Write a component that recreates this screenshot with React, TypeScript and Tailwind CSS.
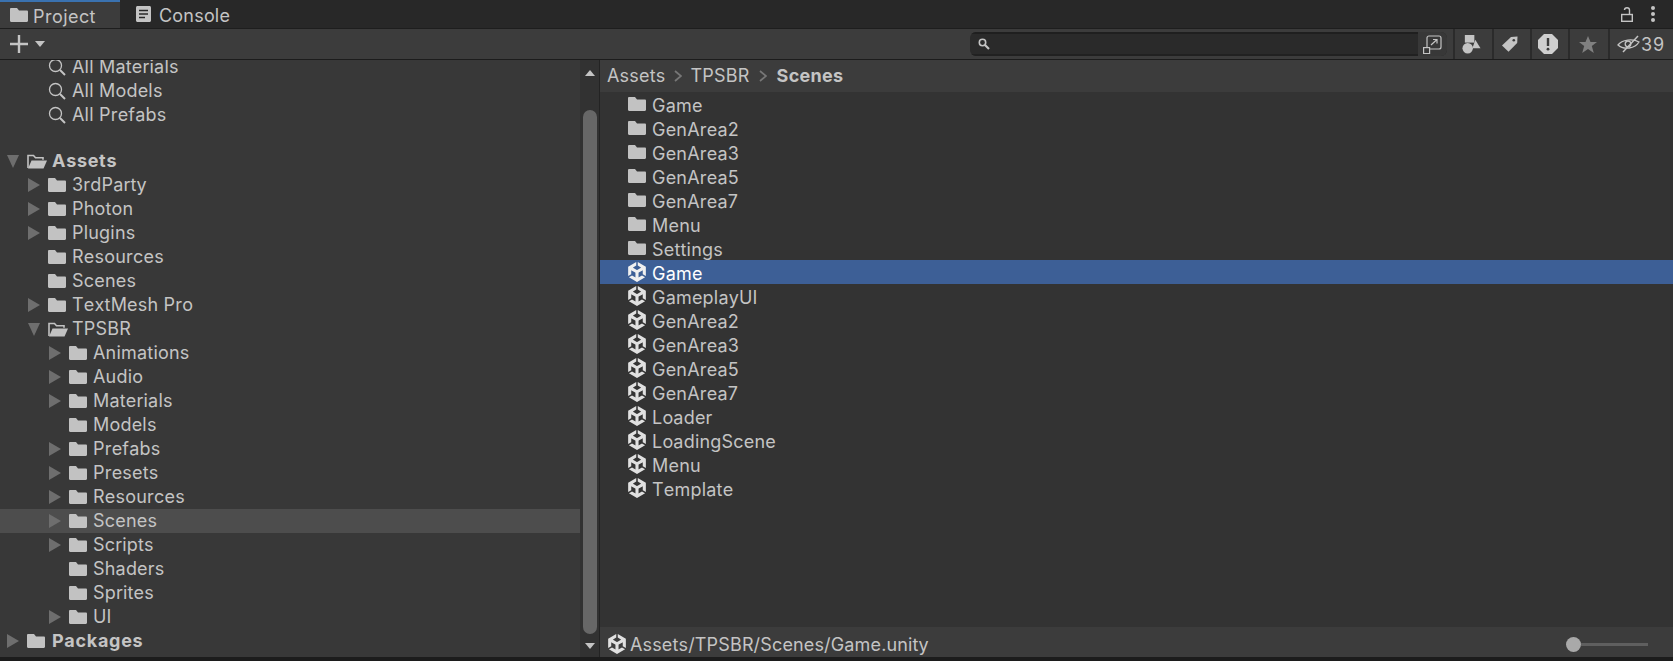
import React from "react";
import { SiUnity } from "react-icons/si";

const Folder = ({ className = "" }: { className?: string }) => (
  <svg viewBox="0 0 18 14" width="18" height="14" className={className}>
    <path d="M0 1.200C0 .5.5 0 1.200 0H7l2 2.400h7.800c.7 0 1.200.5 1.200 1.200v9.200c0 .7-.5 1.200-1.200 1.200H1.200C.5 14 0 13.500 0 12.800Z" fill="#c2c2c2" />
  </svg>
);

const OpenFolder = () => (
  <svg viewBox="0 0 20 15" width="20" height="15">
    <path d="M1 14V1.500h5.500l2 2.300h7.500v2" fill="none" stroke="#c2c2c2" strokeWidth="1.600" />
    <path d="M1 14.500 4.500 6.500H20l-3.500 8Z" fill="#c2c2c2" />
  </svg>
);

const Search = () => (
  <svg viewBox="0 0 18 18" width="18" height="18" fill="none" stroke="#c4c4c4">
    <circle cx="7.500" cy="7.500" r="6" strokeWidth="1.300" />
    <path d="M12 12 17 17" strokeWidth="2" />
  </svg>
);

const Arrow = ({ open = false }: { open?: boolean }) =>
  open ? (
    <svg viewBox="0 0 12 13" width="12" height="13"><path d="M0 0H12L6 13Z" fill="#6e6e6e" /></svg>
  ) : (
    <svg viewBox="0 0 12 14" width="12" height="14"><path d="M0 0 12 7 0 14Z" fill="#6e6e6e" /></svg>
  );

type Row = { name: string; depth: number; arrow?: boolean; open?: boolean; bold?: boolean; selected?: boolean };

const tree: Row[] = [
  { name: "Assets", depth: 0, arrow: true, open: true, bold: true },
  { name: "3rdParty", depth: 1, arrow: true },
  { name: "Photon", depth: 1, arrow: true },
  { name: "Plugins", depth: 1, arrow: true },
  { name: "Resources", depth: 1 },
  { name: "Scenes", depth: 1 },
  { name: "TextMesh Pro", depth: 1, arrow: true },
  { name: "TPSBR", depth: 1, arrow: true, open: true },
  { name: "Animations", depth: 2, arrow: true },
  { name: "Audio", depth: 2, arrow: true },
  { name: "Materials", depth: 2, arrow: true },
  { name: "Models", depth: 2 },
  { name: "Prefabs", depth: 2, arrow: true },
  { name: "Presets", depth: 2, arrow: true },
  { name: "Resources", depth: 2, arrow: true },
  { name: "Scenes", depth: 2, arrow: true, selected: true },
  { name: "Scripts", depth: 2, arrow: true },
  { name: "Shaders", depth: 2 },
  { name: "Sprites", depth: 2 },
  { name: "UI", depth: 2, arrow: true },
  { name: "Packages", depth: 0, arrow: true, bold: true },
];

const depthPad = ["pl-[7px]", "pl-[28px]", "pl-[49px]"];

function TreeRow({ r }: { r: Row }) {
  return (
    <div className={`flex h-6 items-center ${depthPad[r.depth]} ${r.selected ? "bg-[#4d4d4d]" : ""}`}>
      <div className="flex w-[20px] shrink-0 items-center">{r.arrow && <Arrow open={r.open} />}</div>
      <div className="flex w-[20px] shrink-0 items-center">{r.open ? <OpenFolder /> : <Folder />}</div>
      <span className={r.bold ? "ml-[5px] font-bold tracking-[0.7px]" : "ml-[4px]"}>{r.name}</span>
    </div>
  );
}

const folders = ["Game", "GenArea2", "GenArea3", "GenArea5", "GenArea7", "Menu", "Settings"];
const scenes = ["Game", "GameplayUI", "GenArea2", "GenArea3", "GenArea5", "GenArea7", "Loader", "LoadingScene", "Menu", "Template"];

export default function App() {
  return (
    <div className="flex h-[661px] w-[1673px] flex-col overflow-hidden bg-[#1c1c1c] font-['Inter',sans-serif] text-[18px] leading-6 tracking-[0.2px] text-[#c4c4c4] [font-kerning:none]">
      {/* Tab bar */}
      <div className="flex h-[29px] shrink-0 items-stretch border-b border-[#1e1e1e] bg-[#282828]">
        <div className="flex w-[120px] items-center gap-[5px] border-t-2 border-[#3a72b0] bg-[#3c3c3c] pl-[10px]">
          <Folder />
          <span className="pt-[3px] tracking-[0.4px]">Project</span>
        </div>
        <div className="ml-[16px] flex items-center gap-[8px]">
          <svg viewBox="0 0 15 16" width="15" height="16">
            <path d="M0 1.500C0 .7.7 0 1.500 0h12c.8 0 1.500.7 1.500 1.500v13c0 .8-.7 1.500-1.500 1.500h-12C.7 16 0 15.300 0 14.500Z" fill="#c4c4c4" />
            <path d="M3 4.500h9M3 8h9M3 11.500h6" stroke="#282828" strokeWidth="1.400" />
          </svg>
          <span className="pt-[4px]">Console</span>
        </div>
        <div className="flex-1" />
        <div className="mr-[18px] flex items-center gap-[18px]">
          <svg viewBox="0 0 12 15" width="12" height="15" fill="none" stroke="#c4c4c4" strokeWidth="1.400">
            <rect x="0.700" y="7.500" width="10.600" height="6.800" />
            <path d="M8.500 7.500V3C8.500 1.600 7.600.8 6 .8S3.500 1.600 3.500 3" />
          </svg>
          <div className="flex flex-col gap-[2px]">
            <div className="size-[4px] rounded-full bg-[#c4c4c4]" />
            <div className="size-[4px] rounded-full bg-[#c4c4c4]" />
            <div className="size-[4px] rounded-full bg-[#c4c4c4]" />
          </div>
        </div>
      </div>

      {/* Toolbar */}
      <div className="flex h-[31px] shrink-0 items-center border-b border-[#1c1c1c] bg-[#3c3c3c]">
        <svg viewBox="0 0 18 18" width="18" height="18" className="ml-[10px]">
          <path d="M9 0V18M0 9H18" stroke="#c4c4c4" strokeWidth="2.400" />
        </svg>
        <svg viewBox="0 0 10 6" width="10" height="6" className="ml-[7px]"><path d="M0 0H10L5 6Z" fill="#c4c4c4" /></svg>
        <div className="flex-1" />
        <div className="flex h-[24px] w-[477px] items-stretch overflow-hidden rounded-[6px] bg-[#2a2a2a]">
          <div className="flex flex-1 items-center border-t-2 border-b-2 border-t-[#1f1f1f] border-b-[#212121] pl-[8px]">
            <svg viewBox="0 0 12 12" width="12" height="12" fill="none" stroke="#c4c4c4">
              <circle cx="4.500" cy="4.500" r="3.200" strokeWidth="1.600" />
              <path d="M7 7 11 11" strokeWidth="2.200" />
            </svg>
          </div>
          <div className="flex w-[29px] items-center justify-center bg-[#383838]">
            <svg viewBox="0 0 19 19" width="19" height="19" fill="none" stroke="#c4c4c4" strokeWidth="1.200">
              <path d="M4 13V3C4 1.800 4.800 1 6 1H16C17.200 1 18 1.800 18 3V12C18 13.200 17.200 14 16 14H7" />
              <rect x="0.600" y="12.600" width="6" height="6" />
              <path d="M8 10 14 4.500M10 4.500H14V8.500" />
            </svg>
          </div>
        </div>
        <div className="ml-[6px] flex h-full">
          <div className="flex w-[39px] items-center border-l-2 border-[#2b2b2b] pl-[7px]">
            <svg viewBox="0 0 20 20" width="19" height="19" fill="#c4c4c4">
              <rect x="3" y="0" width="10" height="8" />
              <circle cx="6" cy="14" r="5.500" />
              <path d="M14 5 19.500 14H11Z" />
            </svg>
          </div>
          <div className="flex w-[38px] items-center border-l-2 border-[#2b2b2b] pl-[8px]">
            <svg viewBox="0 0 16 16" width="16" height="16">
              <path d="M0 9.500 9 .9 15.500 .5 15.200 7 6.500 15.800Z" fill="#c4c4c4" />
              <circle cx="11.800" cy="4.200" r="1.300" fill="#3c3c3c" />
            </svg>
          </div>
          <div className="flex w-[38px] items-center border-l-2 border-[#2b2b2b] pl-[6px]">
            <svg viewBox="0 0 20 20" width="20" height="20">
              <path d="M6 0H14L20 6V14L14 20H6L0 14V6Z" fill="#cfcfcf" />
              <path d="M10 4V12" stroke="#3c3c3c" strokeWidth="2.400" />
              <circle cx="10" cy="15.200" r="1.400" fill="#3c3c3c" />
            </svg>
          </div>
          <div className="flex w-[40px] items-center border-l-2 border-[#2b2b2b] pl-[9px]">
            <svg viewBox="0 0 18 17" width="18" height="17">
              <path d="M9 0 11.500 6H18L12.800 10 14.800 17 9 13 3.200 17 5.200 10 0 6H6.500Z" fill="#808080" />
            </svg>
          </div>
          <div className="flex w-[65px] items-center border-l-2 border-[#2b2b2b] pl-[7px]">
            <svg viewBox="0 0 23 18" width="23" height="18" fill="none" stroke="#c4c4c4" strokeWidth="1.300">
              <path d="M1 10C5 4.500 16 3.500 22 7 18 13.500 7 15.500 1 10Z" />
              <circle cx="11" cy="9" r="2.800" />
              <path d="M6 17 21 1" strokeWidth="1.500" />
            </svg>
            <span className="ml-[1px] pt-[2px] tracking-[0.8px]">39</span>
          </div>
        </div>
      </div>

      {/* Body */}
      <div className="flex h-[597px] shrink-0">
        {/* Left tree */}
        <div className="w-[580px] shrink-0 overflow-hidden bg-[#383838]">
          <div className="-mt-[5px]">
            {["All Materials", "All Models", "All Prefabs"].map((s) => (
              <div key={s} className="flex h-6 items-center pl-[48px]">
                <Search />
                <span className="ml-[6px]">{s}</span>
              </div>
            ))}
            <div className="h-[22px]" />
            {tree.map((r, i) => (
              <TreeRow key={i} r={r} />
            ))}
          </div>
        </div>

        {/* Scrollbar */}
        <div className="flex w-[20px] shrink-0 flex-col items-center border-r border-[#232323] bg-[#323232] pt-[10px]">
          <svg viewBox="0 0 10 6" width="10" height="6"><path d="M5 0 10 6H0Z" fill="#c4c4c4" /></svg>
          <div className="mt-[34px] h-[524px] w-[14px] rounded-[7px] bg-[#676767]" />
          <svg viewBox="0 0 10 6" width="10" height="6" className="mt-[9px]"><path d="M0 0H10L5 6Z" fill="#c4c4c4" /></svg>
        </div>

        {/* Right */}
        <div className="flex min-w-0 flex-1 flex-col bg-[#333333]">
          <div className="flex h-[32px] shrink-0 items-center bg-[#3c3c3c] pl-[7px]">
            <span>Assets</span>
            <svg viewBox="0 0 8 12" width="8" height="12" className="ml-[8px] mr-[9px]" fill="none" stroke="#777" strokeWidth="1.800"><path d="M1 1 7 6 1 11" /></svg>
            <span>TPSBR</span>
            <svg viewBox="0 0 8 12" width="8" height="12" className="ml-[9px] mr-[10px]" fill="none" stroke="#777" strokeWidth="1.800"><path d="M1 1 7 6 1 11" /></svg>
            <span className="font-bold tracking-[0.3px]">Scenes</span>
          </div>
          <div className="flex-1">
            {folders.map((f, i) => (
              <div key={i} className="flex h-6 items-center pl-[28px]">
                <Folder />
                <span className="ml-[6px] pt-[4px]">{f}</span>
              </div>
            ))}
            {scenes.map((s, i) => (
              <div key={i} className={`flex h-6 items-center pl-[27px] ${i === 0 ? "bg-[#3d5f96] text-white" : ""}`}>
                <SiUnity size={20} color={i === 0 ? "#f0f0f0" : "#e0e0e0"} />
                <span className="ml-[5px] pt-[4px]">{s}</span>
              </div>
            ))}
          </div>
          <div className="flex h-[30px] shrink-0 items-center bg-[#3c3c3c] pl-[7px] pt-[4px]">
            <SiUnity size={20} color="#e0e0e0" />
            <span className="ml-[3px] pt-[2px] tracking-[0.15px]">Assets/TPSBR/Scenes/Game.unity</span>
            <div className="flex-1" />
            <div className="mr-[25px] flex items-center">
              <div className="size-[15px] rounded-full bg-[#a9a9a9]" />
              <div className="h-[3px] w-[67px] bg-[#5f5f5f]" />
            </div>
          </div>
        </div>
      </div>
    </div>
  );
}
